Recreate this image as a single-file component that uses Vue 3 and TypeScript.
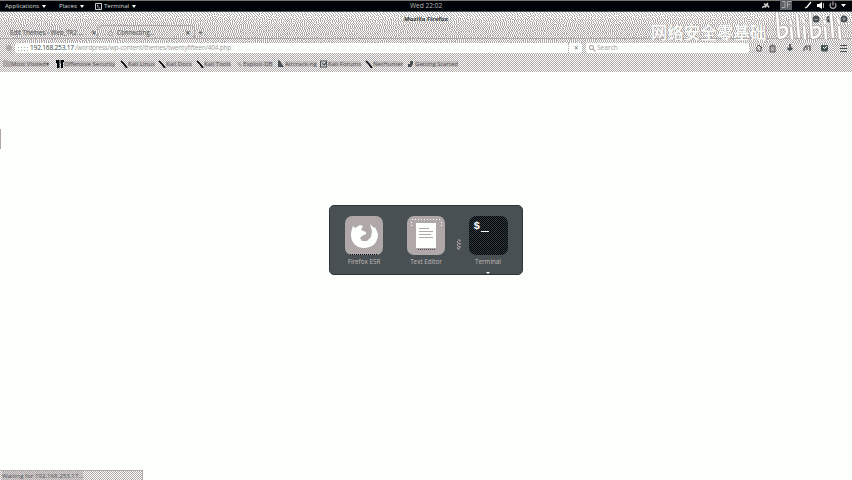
<script setup lang="ts">
interface Bookmark { label: string; icon: string; width: number }

const bookmarks: Bookmark[] = [
  { label: 'Most Visited▾', icon: 'folder', width: 53 },
  { label: 'Offensive Security', icon: 'offsec', width: 64 },
  { label: 'Kali Linux', icon: 'kali', width: 38 },
  { label: 'Kali Docs', icon: 'kali', width: 38 },
  { label: 'Kali Tools', icon: 'kali', width: 39 },
  { label: 'Exploit-DB', icon: 'bug', width: 42 },
  { label: 'Aircrack-ng', icon: 'air', width: 43 },
  { label: 'Kali Forums', icon: 'forum', width: 45 },
  { label: 'NetHunter', icon: 'kali', width: 42 },
  { label: 'Getting Started', icon: 'fox', width: 60 },
]

// Error-diffused stipple, returned as one path of 1px-high runs.
function stipple(width: number, height: number, density: (y: number) => number): string {
  let path = ''
  let below = new Array<number>(width + 2).fill(0)
  for (let y = 0; y < height; y++) {
    const row = below
    below = new Array<number>(width + 2).fill(0)
    let start = -1
    for (let x = 0; x < width; x++) {
      const noise = Math.sin(x * 12.9898 + y * 78.233) * 43758.5453
      const jitter = (noise - Math.floor(noise) - 0.5) * 0.12
      const value = density(y) + row[x + 1]
      const on = value + jitter > 0.5
      const error = value - (on ? 1 : 0)
      row[x + 2] = (row[x + 2] ?? 0) + (error * 7) / 16
      below[x] += (error * 3) / 16
      below[x + 1] += (error * 5) / 16
      below[x + 2] = (below[x + 2] ?? 0) + error / 16
      if (on && start < 0) start = x
      if (!on && start >= 0) { path += `M${start} ${y}h${x - start}v1H${start}z`; start = -1 }
    }
    if (start >= 0) path += `M${start} ${y}H${width}v1H${start}z`
  }
  return path
}

const chromeStipple = stipple(852, 60, (y) => (y < 7 ? 0.36 : y < 12 ? 0.45 : y < 31 ? 0.52 : 0.5))
const statusStipple = stipple(143, 10, () => 0.5)
</script>

<template>
  <div class="screen">
    <header class="topbar">
      <span class="menu apps">Applications<i class="caret" /></span>
      <span class="menu places">Places<i class="caret" /></span>
      <span class="menu term">
        <svg width="7" height="7" viewBox="0 0 7 7"><path d="M.5.5h6v6h-6z M2 2l1.3 1.2L2 4.4M3.5 5h1.7" fill="none" stroke="#fcfffc" stroke-width=".8" /></svg>
        Terminal<i class="caret" />
      </span>
      <span class="clock">Wed 22:02</span>
      <svg class="tray" width="90" height="12" viewBox="0 0 90 12">
        <path d="M0 7.500l3-1.500M2 3.500l2 1.500 2-2M3 7.500l2-3 2 3" stroke="#d0cccb" stroke-width="1.500" fill="none" />
        <path d="M18 0h12v10H18z" fill="#5c6266" />
        <path d="M20 1.500h3v6h-3M25.500 7.500v-6h4M26 4.500h2" stroke="#b0a8a8" fill="none" />
        <path d="M43 8l2-1 4-5" stroke="#fcfffc" stroke-width="1.300" fill="none" />
        <path d="M55 4h2l3-2v7l-3-2h-2z" fill="#fcfffc" /><path d="M61.500 3v5" stroke="#b0a8a8" />
        <path d="M69 3.200a3 3 0 1 0 4 0M71 1.500v4" stroke="#b0a8a8" stroke-width="1.200" fill="none" />
        <path d="M79 4h5l-2.500 3z" fill="#fcfffc" />
      </svg>
    </header>

    <section class="browser">
      <svg class="grain" width="852" height="60" shape-rendering="crispEdges"><path :d="chromeStipple" fill="#b0a8a8" /></svg>
      <div class="titlebar">
        <span>Mozilla Firefox</span>
        <svg width="38" height="10" viewBox="0 0 38 10" class="controls">
          <g fill="#485054"><circle cx="4" cy="5" r="3.500" /><circle cx="18" cy="5" r="3.500" /><circle cx="32" cy="5" r="3.500" /></g>
          <path d="M2.500 5.500h3M15 5.500l3-2v3M30.500 5h3M32 3.500v3" stroke="#b0a8a8" fill="none" />
        </svg>
      </div>
      <div class="tabs">
        <div class="tab first"><span>Edit Themes ‹ Web_TR2 …</span><b>×</b></div>
        <div class="tab active"><i class="spinner" /><span>Connecting…</span><b>×</b></div>
        <div class="plus">+</div>
      </div>
      <div class="navbar">
        <i class="back" />
        <div class="address"><i class="site" /><span class="host">192.168.253.17</span><span class="path">/wordpress/wp-content/themes/twentyfifteen/404.php</span><b>×</b></div>
        <div class="search">
          <svg width="7" height="7" viewBox="0 0 7 7"><path d="M4.500 2.500a2 2 0 1 1-4 0a2 2 0 1 1 4 0M4 4l2.500 2.500" stroke="#b0a8a8" stroke-width="1.100" fill="none" /></svg>
          Search
        </div>
        <svg class="tools" width="94" height="10" viewBox="0 0 94 10">
          <g fill="none" stroke="#485054">
            <path d="M2 5l3-3 3 3H6.500M3 5v3h4V5" />
            <path d="M16 3h5v6h-5z" fill="#b0a8a8" /><path d="M17.500 2h2" />
            <path d="M36 1v6M33.500 5l2.500 2 2.500-2" stroke-width="1.800" />
            <path d="M50 8V6l2-3h4v5M53 4v3" stroke-width="1.200" />
          </g>
          <path d="M67 2h7v5l-1 1.500h-5L67 7z" fill="#485054" /><path d="M69 4l1.500 1.500L73 3" stroke="#fcfffc" fill="none" />
          <path d="M86 2.500h7M86 5.500h7M86 8.500h7" stroke="#485054" />
        </svg>
      </div>
      <nav class="bookmarks">
        <span v-for="b in bookmarks" :key="b.label" class="bookmark" :style="{ width: b.width + 'px' }">
          <svg width="8" height="8" viewBox="0 0 8 8">
            <path v-if="b.icon === 'folder'" d="M0 0h3l1 1h4v6H0z" fill="#b0a8a8" />
            <path v-else-if="b.icon === 'offsec'" d="M0 0h3.500v8H1V3H0zM4.500 0h3.500v2H7v6H5V3h-.5z" fill="#000408" />
            <path v-else-if="b.icon === 'kali'" d="M1 1l3 3 3 4" stroke="#000408" stroke-width="1.700" fill="none" />
            <path v-else-if="b.icon === 'bug'" d="M2 2l2 2 2-1M3 5h3v2" stroke="#b0a8a8" stroke-width="1.500" fill="none" />
            <path v-else-if="b.icon === 'air'" d="M1 0l2 1 2 3 2 3H1z" fill="#485054" />
            <path v-else-if="b.icon === 'forum'" d="M.5 1h6v6h-6zM2 3l2 2 3-4" stroke="#485054" stroke-width="1.200" fill="none" />
            <path v-else d="M3 1h3v3L4 7H1V4h2z" fill="#485054" />
          </svg>
          <em>{{ b.label }}</em>
        </span>
      </nav>
    </section>

    <main class="page">
      <i class="edge" />
      <div class="switcher">
        <div class="app">
          <svg width="40" height="42" viewBox="0 0 40 42">
            <rect x="1" y="1" width="38" height="39" rx="7" fill="#b0a8a8" />
            <path d="M6 39.500h28" stroke="#000408" stroke-dasharray="1 1" />
            <path d="M9 11l2 2 5-3 3 1-2 4 5 2v2l-4 2-2 2 2 3h5l4-4 1-6-2-7 4 4 1-1 3 7c0 9-6 14-14 14S7 27 7 20c0-4 1-6 2-9z" fill="#fcfffc" />
          </svg>
          <span>Firefox ESR</span>
        </div>
        <div class="app">
          <svg width="40" height="42" viewBox="0 0 40 42">
            <rect x="1" y="1" width="38" height="39" rx="7" fill="#b0a8a8" />
            <path d="M6 4.500h28M5.500 7v6M35.500 7v6" stroke="#fcfffc" stroke-dasharray="1 2" />
            <path d="M10 8h20v25H10z" fill="#fcfffc" />
            <path d="M13 13.500h10M13 16.500h14M13 19.500h12M13 22.500h14" stroke="#b0a8a8" />
            <path d="M12 34.500h18" stroke="#485054" stroke-dasharray="1 1" />
          </svg>
          <span>Text Editor</span>
        </div>
        <div class="app">
          <div class="terminal-icon"><b>$</b><i /></div>
          <span>Terminal</span>
        </div>
        <svg class="cursor" width="4" height="11" viewBox="0 0 4 11"><path d="M1 1h2M1 4.500h2M1 7.500h2M1 10h2M.5 2v8M3 1v8" stroke="#b0a8a8" stroke-dasharray="2 1" fill="none" /></svg>
        <i class="pointer" />
      </div>
    </main>

    <footer class="status">
      <svg class="grain" width="143" height="10" shape-rendering="crispEdges"><path :d="statusStipple" fill="#b0a8a8" /></svg>
      <span>Waiting for 192.168.253.17…</span>
    </footer>

    <div class="watermark">
      <span>网络安全零基础</span>
      <svg width="76" height="32" viewBox="0 0 76 32">
        <g v-for="layer in 2" :key="layer" fill="none" :stroke="layer === 1 ? '#b0a8a8' : '#fcfffc'" :stroke-width="layer === 1 ? 4.2 : 2.6">
          <path d="M4 1l2 25M7 16q7-3 7 3t-8 7M18 15l1 12M17 8l1 4M24 3l2 23M31 14l1 13M30 7l1 4" />
          <path d="M37 1l2 25M40 16q7-3 7 3t-8 7M52 15l1 12M51 8l1 4M58 3l2 23M66 14l1 13M65 7l1 4" />
        </g>
      </svg>
    </div>
  </div>
</template>

<style>
body { overflow: hidden; background: #fcfffc; }
</style>

<style scoped>
* { box-sizing: border-box; }
.screen {
  position: relative; width: 852px; height: 480px; display: flex; flex-direction: column; overflow: hidden;
  background: #fcfffc; font: 6.5px/10px "Open Sans", "Noto Sans", sans-serif; white-space: nowrap;
}
.topbar {
  height: 12px; flex: none; display: flex; align-items: center; position: relative;
  background: #000408; color: #d8d8d6; border-bottom: 1px solid #485054; border-top: 1px solid #77736f;
}
.menu { display: flex; align-items: center; }
.apps { padding-left: 5px; width: 59px; font-size: 6px; }
.places { width: 36px; font-size: 6.1px; }
.term { font-size: 6.1px; }
.term svg { margin-right: 2px; }
.caret { border: 2px solid transparent; border-top: 3px solid #fcfffc; border-bottom: 0; margin-left: 3px; }
.clock { position: absolute; left: 410px; width: 34px; top: 0; color: #b8b6b4; font-size: 6.6px; }
.tray { margin-left: auto; width: 90px; }

.browser, .status { position: relative; isolation: isolate; background: #fcfffc; }
.grain { position: absolute; left: 0; top: 0; z-index: -1; }
.browser { height: 60px; flex: none; display: flex; flex-direction: column; border-radius: 2px 2px 0 0; }
.titlebar { height: 13px; display: flex; justify-content: center; align-items: center; position: relative; color: #303438; font-weight: 700; font-size: 6px; }
.controls { position: absolute; right: 2px; top: 2px; }
.tabs { height: 14px; display: flex; border-bottom: 1px solid #b0a8a8; color: #555a5c; }
.tab { display: flex; align-items: center; padding-top: 2px; }
.tab span { flex: 1; font-size: 6.2px; text-shadow: 0 0 1px #b0a8a8; }
.tab b { color: #555a5c; font-size: 8px; }
.first { width: 97px; padding-left: 10px; padding-right: 1px; }
.active { width: 98px; padding: 1px 4px 0 10px; border: 1px solid #b0a8a8; border-bottom: 0; border-radius: 5px 5px 0 0; margin-bottom: -1px; }
.active span { padding-left: 4px; }
.spinner { width: 5px; height: 5px; border: 1px dotted #8c8686; border-radius: 50%; }
.plus { padding-left: 3px; line-height: 15px; font-size: 9px; font-weight: 700; color: #787474; }
.navbar { height: 18px; display: flex; align-items: center; }
.back { width: 6px; height: 6px; border-radius: 50%; background: #b0a8a8; margin-left: 6px; margin-right: 3px; flex: none; }
.address { width: 567px; height: 10px; background: #fcfffc; display: flex; align-items: center; border-radius: 2px; flex: none; }
.site { width: 12px; height: 5px; margin-left: 2px; margin-right: 1px; background: radial-gradient(circle, #b0a8a8 .7px, transparent 1px) 0 0 / 3px 3px; }
.host { color: #384044; width: 45px; font-size: 6.6px; letter-spacing: -.2px; }
.path { color: #a39b9b; font-size: 6.5px; letter-spacing: -.2px; }
.address b { margin-left: auto; width: 14px; padding-left: 5px; border-left: 1px dotted #b0a8a8; color: #9b9595; font-size: 8px; }
.search { width: 163px; height: 10px; margin-left: 4px; padding-left: 3px; display: flex; align-items: center; gap: 1px; background: #fcfffc; color: #a39b9b; border-radius: 2px; flex: none; font-size: 6.6px; }
.tools { margin-left: 5px; }
.bookmarks { height: 14px; display: flex; align-items: center; padding-left: 3px; }
.bookmark { display: flex; align-items: center; flex: none; color: #4c5255; font-size: 6.1px; }
.bookmark em { font-style: normal; background: rgba(176, 168, 168, .5); line-height: 5px; height: 6px; }

.page { flex: 1; display: flex; justify-content: center; align-items: flex-start; position: relative; }
.edge { position: absolute; left: 0; top: 57px; width: 1px; height: 20px; background: #b0a8a8; }
.switcher { position: relative; margin-top: 133px; width: 194px; height: 70px; padding: 11px 14px; display: flex; justify-content: space-between; background: #485054; border: 1px solid #2c3438; border-radius: 5px; }
.app { width: 40px; display: flex; flex-direction: column; align-items: center; color: #c2bbb9; font-size: 6.3px; margin-top: -2px; }
.app > svg { flex: none; }
.app > span { line-height: 10px; }
.terminal-icon { width: 39px; height: 39px; margin: 1px 0 2px; flex: none; border-radius: 7px; background: repeating-conic-gradient(#000408 0 25%, #303a3e 0 50%) 0 0 / 2px 2px; display: flex; padding: 4px 5px; color: #fcfffc; }
.terminal-icon b { font: 700 11px/12px "Liberation Mono", monospace; }
.terminal-icon i { width: 8px; height: 1px; margin: 11px 0 0 1px; background: #fcfffc; }
.cursor { position: absolute; left: 127px; top: 33px; }
.pointer { position: absolute; left: 156px; bottom: 0; border: 2px solid transparent; border-top-color: #fcfffc; border-bottom: 0; }
.status { position: absolute; left: 0; bottom: 0; width: 143px; height: 10px; padding-left: 2px; color: #50565a; font-size: 6.15px; border: 1px solid #b0a8a8; line-height: 9px; border-left: 0; border-bottom: 0; }
.status span { background: rgba(176, 168, 168, .5); }
.watermark { position: absolute; left: 651px; top: 12px; display: flex; align-items: center; color: #fcfffc; font: 500 16.5px/24px "Noto Sans CJK SC", sans-serif; }
.watermark span { width: 122px; padding-top: 7px; text-shadow: 1px 0 #b0a8a8; }
</style>
